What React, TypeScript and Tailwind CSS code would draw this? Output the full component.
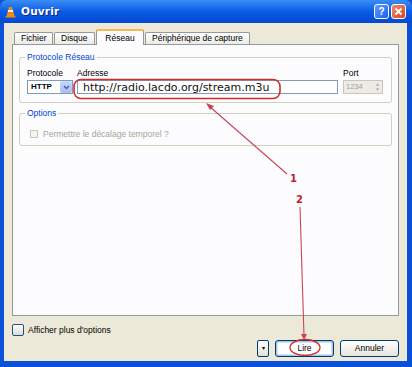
import React from 'react'

const UI = { fontFamily: '"Liberation Sans", Tahoma, sans-serif' }

function TitleBar() {
  return (
    <div className="h-[23px] flex items-center pl-[5px] pr-[6px] rounded-t-[7px] bg-gradient-to-b from-[#3b8cf5] via-[#0a5ce6] to-[#0748cf]">
      {/* VLC cone */}
      <svg width="11" height="12" viewBox="0 0 11 12" className="mr-[5px]">
        <path d="M4 1 L7 1 L9.5 10 L1.5 10 Z" fill="#f28a12" />
        <path d="M3.3 4 L7.7 4 L8.2 6 L2.8 6 Z" fill="#fff" />
        <rect x="0.5" y="10" width="10" height="1.6" rx="0.5" fill="#f28a12" />
      </svg>
      <span className="text-white font-bold text-[10.5px] tracking-[0.2px]" style={{ fontFamily: '"DejaVu Sans", sans-serif', textShadow: '1px 1px 0 #0a2a8a' }}>
        Ouvrir
      </span>
      <div className="ml-auto flex gap-[2px]">
        <div className="w-[15px] h-[15px] rounded-[3px] border border-white bg-gradient-to-br from-[#5c9cff] to-[#1d5ee8] flex items-center justify-center text-white font-bold text-[10px] leading-none">?</div>
        <div className="w-[15px] h-[15px] rounded-[3px] border border-white bg-gradient-to-br from-[#f08a6a] to-[#d8421c] flex items-center justify-center">
          <svg width="9" height="9" viewBox="0 0 9 9">
            <path d="M1.5 1.5 L7.5 7.5 M7.5 1.5 L1.5 7.5" stroke="#fff" strokeWidth="1.8" />
          </svg>
        </div>
      </div>
    </div>
  )
}

function Tabs() {
  const tab = 'h-[12px] mt-[3px] px-[6px] flex items-center border border-b-0 border-[#919b9c] rounded-t-[2px] bg-gradient-to-b from-white to-[#ecebe6] text-[8.5px] text-black'
  return (
    <div className="flex items-end gap-[1px] pl-[2px] h-[16px] relative z-10">
      <div className={tab + ' w-[39px]'}>Fichier</div>
      <div className={tab + ' w-[41px]'}>Disque</div>
      <div className="h-[16px] w-[48px] flex items-center justify-center border border-b-0 border-[#919b9c] border-t-2 border-t-[#f7b94a] rounded-t-[2px] bg-[#fcfcfe] text-[8.5px] text-black -mb-[1px]">Réseau</div>
      <div className={tab + ' w-[105px]'}>Périphérique de capture</div>
    </div>
  )
}

function Group({ title, children, h }: { title: string; children: React.ReactNode; h: string }) {
  return (
    <div className={'relative border border-[#d0d0bf] rounded-[3px] ' + h}>
      <span className="absolute -top-[6px] left-[5px] px-[2px] bg-[#fcfcfe] text-[8.5px] leading-[11px] text-[#0046d5]">{title}</span>
      {children}
    </div>
  )
}

export default function App() {
  return (
    <div className="w-[412px] h-[367px] bg-[#0a50d8] flex flex-col relative" style={UI}>
      <TitleBar />
      <div className="flex-1 ml-[4px] mr-[5px] mb-[6px] bg-[#ece9d8] flex flex-col pl-[8px] pr-[8px] pt-[5px]">
        <Tabs />
        <div className="h-[272px] border border-[#919b9c] bg-[#fcfcfe] flex flex-col px-[6px] pt-[12px] gap-[10px]">
          <Group title="Protocole Réseau" h="h-[46px]">
            <div className="flex gap-[4px] pl-[7px] pt-[10px]">
              <div className="flex flex-col gap-[2px]">
                <span className="text-[8.5px] leading-[10px]">Protocole</span>
                <div className="w-[46px] h-[14px] border border-[#7f9db9] bg-white flex items-center">
                  <span className="pl-[3px] text-[8px] font-bold flex-1">HTTP</span>
                  <div className="w-[12px] h-[12px] rounded-[2px] bg-gradient-to-b from-[#c6d6fc] to-[#a7c0f5] flex items-center justify-center">
                    <svg width="7" height="5" viewBox="0 0 7 5"><path d="M1 1 L3.5 3.5 L6 1" stroke="#4d6185" strokeWidth="1.4" fill="none" /></svg>
                  </div>
                </div>
              </div>
              <div className="flex flex-col gap-[2px]">
                <span className="text-[8.5px] leading-[10px]">Adresse</span>
                <div className="w-[261px] h-[14px] border border-[#7f9db9] bg-white flex items-center pl-[5px]">
                  <span className="text-[11px] leading-none text-[#111]" style={{ fontFamily: '"DejaVu Sans", sans-serif' }}>http://radio.lacdo.org/stream.m3u</span>
                </div>
              </div>
              <div className="flex flex-col gap-[2px] ml-[1px]">
                <span className="text-[8.5px] leading-[10px]">Port</span>
                <div className="w-[40px] h-[14px] border border-[#c9c7ba] bg-[#ecebe6] flex items-center justify-between px-[2px]">
                  <span className="text-[7.5px] text-[#a0a0a0]">1234</span>
                  <span className="text-[5px] leading-[5px] text-[#b0b0b0] flex flex-col">▲<br />▼</span>
                </div>
              </div>
            </div>
          </Group>
          <Group title="Options" h="h-[33px]">
            <div className="flex items-center gap-[5px] pl-[10px] pt-[15px]">
              <div className="w-[8px] h-[8px] border border-[#c9c7ba] bg-[#f5f4ea]" />
              <span className="text-[8.5px] leading-[10px] text-[#a6a59b]">Permettre le décalage temporel ?</span>
            </div>
          </Group>
        </div>
        <div className="flex items-center gap-[4px] mt-[8px]">
          <div className="w-[12px] h-[12px] border border-[#1c5180] rounded-[2px] bg-gradient-to-b from-white to-[#dcdad0]" />
          <span className="text-[8.5px]">Afficher plus d'options</span>
        </div>
        <div className="flex justify-end items-center gap-[6px] mt-[3px]">
          <div className="w-[12px] h-[17px] border border-[#003c74] rounded-[2px] bg-gradient-to-b from-white to-[#e3e1d6] flex items-center justify-center text-[6px] leading-none">▾</div>
          <div className="w-[59px] h-[17px] border border-[#003c74] rounded-[3px] bg-white flex items-center justify-center shadow-[inset_0_0_0_1.5px_#a6c4f0] text-[8.5px]">Lire</div>
          <div className="w-[59px] h-[17px] border border-[#003c74] rounded-[3px] bg-gradient-to-b from-white to-[#e6e4da] flex items-center justify-center text-[8.5px]">Annuler</div>
        </div>
      </div>

      {/* red annotations drawn over the dialog */}
      <svg className="absolute inset-0 pointer-events-none" width="412" height="367" viewBox="0 0 412 367">
        <rect x="74" y="79.5" width="206" height="19" rx="7" fill="none" stroke="#d42a2a" strokeWidth="1.6" />
        <line x1="287" y1="174" x2="209" y2="106" stroke="#c64656" strokeWidth="1.1" />
        <path d="M206 103 L214 106 L210 110 Z" fill="#c64656" />
        <text x="290" y="182" fontSize="10" fontWeight="bold" fill="#c0202e" fontFamily="DejaVu Sans, sans-serif">1</text>
        <text x="296" y="203" fontSize="10" fontWeight="bold" fill="#c0202e" fontFamily="DejaVu Sans, sans-serif">2</text>
        <line x1="300" y1="207" x2="304" y2="336" stroke="#c64656" strokeWidth="1.1" />
        <path d="M301 334 L307 334 L304 340 Z" fill="#c64656" />
        <ellipse cx="305" cy="347.5" rx="15" ry="8" fill="none" stroke="#d42a2a" strokeWidth="1.3" />
      </svg>
    </div>
  )
}
